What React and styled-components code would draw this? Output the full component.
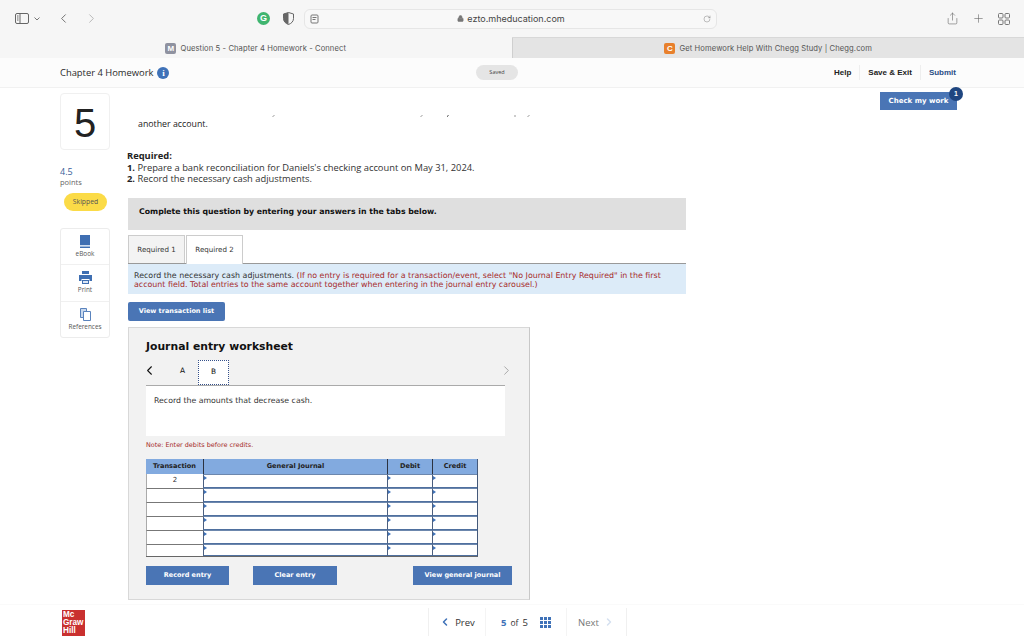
import React from 'react';
import styled, { createGlobalStyle } from 'styled-components';
import { ChevronLeft, ChevronRight, Plus, Share, RotateCw, Lock } from 'lucide-react';

const GlobalStyle = createGlobalStyle`
  html, body {
    margin: 0;
    padding: 0;
    background: #fff;
  }
  * {
    box-sizing: border-box;
  }
  #root {
    width: 1024px;
    height: 640px;
    overflow: hidden;
  }
`;

const sans = `'Open Sans', 'Liberation Sans', sans-serif`;
const verdana = `'DejaVu Sans', 'Liberation Sans', sans-serif`;

const Page = styled.div`
  width: 1024px;
  height: 640px;
  display: flex;
  flex-direction: column;
  font-family: ${sans};
  color: #222;
`;

const Toolbar = styled.div`
  height: 37px;
  background: #f6f6f6;
  display: flex;
  align-items: center;
  padding: 0 8px 0 15px;
  color: #777;
`;

const ToolGroup = styled.div`
  display: flex;
  flex-shrink: 0;
  align-items: center;
  gap: ${(p) => p.$gap || 0}px;
  margin-left: ${(p) => p.$left || 0}px;
`;

const AddressBar = styled.div`
  width: 413px;
  height: 20px;
  flex-shrink: 0;
  margin-left: 10px;
  border: 1px solid #e6e6e6;
  border-radius: 6px;
  background: #f8f8f8;
  display: flex;
  align-items: center;
  padding: 0 5px;
  font: 9px 'Inter', sans-serif;
  color: #444;
`;

const Url = styled.div`
  flex: 1;
  display: flex;
  justify-content: center;
  align-items: center;
  gap: 3px;
`;

const GrammarlyDot = styled.div`
  width: 13px;
  height: 13px;
  border-radius: 50%;
  background: #3fb56f;
  color: #fff;
  font: 700 9px/13px 'Liberation Sans', sans-serif;
  text-align: center;
`;

const TabRow = styled.div`
  height: 21px;
  display: flex;
  border-top: 1px solid #d8d8d8;
`;

const BrowserTab = styled.div`
  flex: 1;
  display: flex;
  align-items: center;
  justify-content: center;
  gap: 4px;
  font: 7.6px 'Inter', sans-serif;
  letter-spacing: 0.1px;
  color: #555;
  background: ${(p) => (p.$active ? '#f6f6f6' : '#e4e4e4')};
  border-left: ${(p) => (p.$active ? 'none' : '1px solid #cfcfcf')};
  border-top: ${(p) => (p.$active ? '1px solid #f6f6f6' : 'none')};
  margin-top: ${(p) => (p.$active ? '-1px' : '0')};
`;

const Favicon = styled.span`
  width: 11px;
  height: 11px;
  border-radius: 2px;
  background: ${(p) => p.$color};
  color: #fff;
  font: 700 8px/11px 'Liberation Sans', sans-serif;
  text-align: center;
`;

const AppHeader = styled.div`
  height: 30px;
  background: #fcfcfc;
  border-bottom: 1px solid #f1f1f1;
  display: flex;
  align-items: center;
  padding: 0 60px;
`;

const HeaderTitle = styled.div`
  font-size: 9.4px;
  color: #2a2a2a;
  width: 416px;
  display: flex;
  align-items: center;
  gap: 4px;
`;

const InfoDot = styled.span`
  width: 12px;
  height: 12px;
  border-radius: 50%;
  background: #3f72b8;
  color: #fff;
  font: 700 9px/12px 'Liberation Serif', serif;
  text-align: center;
`;

const SavedPill = styled.div`
  width: 42px;
  height: 15px;
  border-radius: 8px;
  background: #e5e5e5;
  font-size: 5.5px;
  line-height: 15px;
  text-align: center;
  color: #444;
`;

const HeaderLinks = styled.div`
  margin-left: auto;
  display: flex;
  align-items: center;
  height: 15px;
`;

const HeaderLink = styled.span`
  font-family: 'Liberation Sans', sans-serif;
  font-size: 8px;
  font-weight: 700;
  color: ${(p) => (p.$submit ? '#2a4d86' : '#222')};
  padding: 0 8px;
  line-height: 15px;
  border-left: ${(p) => (p.$first ? 'none' : '1px solid #eee')};
`;

const Body = styled.div`
  flex: 1;
  display: flex;
  padding: 5px 0 0 60px;
  min-height: 0;
`;

const Side = styled.div`
  width: 50px;
  display: flex;
  flex-direction: column;
  font-size: 8px;
`;

const NumberBox = styled.div`
  height: 57px;
  border: 1px solid #f0f0f0;
  border-radius: 4px;
  font: 40px/58px 'Liberation Sans', sans-serif;
  color: #222;
  text-align: center;
`;

const Worth = styled.div`
  margin-top: 16px;
  font-size: 9px;
  line-height: 11px;
  color: #3a5f9a;
`;

const WorthLabel = styled.div`
  font-size: 7.5px;
  line-height: 11px;
  color: #666;
`;

const SkippedPill = styled.div`
  width: 43px;
  height: 18px;
  margin: 5px 0 0 4px;
  border-radius: 9px;
  background: #fbdb47;
  font-size: 6.8px;
  line-height: 18px;
  text-align: center;
  color: #555;
`;

const ToolBox = styled.div`
  margin-top: 17px;
  height: 110px;
  border: 1px solid #ececec;
  border-radius: 3px;
  display: flex;
  flex-direction: column;
`;

const ToolCell = styled.div`
  flex: 1;
  display: flex;
  flex-direction: column;
  align-items: center;
  justify-content: center;
  gap: 1px;
  font-size: 6.4px;
  color: #555;
  border-top: ${(p) => (p.$first ? 'none' : '1px solid #f0f0f0')};
`;

const Main = styled.div`
  width: 559px;
  margin-left: 17px;
  display: flex;
  flex-direction: column;
`;

const ClippedLine = styled.svg`
  display: block;
  margin: 20px 0 0 0;
  height: 5px;
  width: 559px;
`;

const Fragment = styled.div`
  font-size: 8.8px;
  line-height: 12px;
  padding-left: 11px;
`;

const Required = styled.div`
  margin-top: 20px;
  font-size: 9.35px;
  line-height: 11.5px;
  color: #333;
  b {
    color: #222;
  }
`;

const Instruction = styled.div`
  margin-top: 13px;
  height: 32px;
  margin-left: 1px;
  background: #dfdfdf;
  padding-left: 11px;
  font: 700 7.77px/27px ${verdana};
  color: #111;
`;

const Tabs = styled.div`
  margin: 5px 0 0 1px;
  height: 29px;
  display: flex;
  align-items: flex-start;
  border-bottom: 1px solid #999;
`;

const Tab = styled.div`
  width: 57px;
  height: ${(p) => (p.$active ? '29px' : '28px')};
  margin-left: ${(p) => (p.$active ? '1px' : '0')};
  background: ${(p) => (p.$active ? '#fff' : '#f3f3f3')};
  border: 1px solid #ccc;
  border-bottom: none;
  font: 7.1px/27px ${verdana};
  text-align: center;
  color: #333;
`;

const Prompt = styled.div`
  margin-left: 1px;
  height: 30px;
  background: #dcebf8;
  padding: 7px 6px 0 6px;
  font: 7.9px/9.4px ${verdana};
  color: #333;
`;

const PromptNote = styled.span`
  color: #a62a2a;
`;

const BlueButton = styled.div`
  width: ${(p) => p.$w}px;
  height: 19px;
  margin-left: ${(p) => p.$left || 0}px;
  background: #4a75b5;
  color: #fff;
  border-radius: ${(p) => p.$radius || 0}px;
  font: 700 6.5px/19px ${verdana};
  text-align: center;
`;

const TransactionButton = styled(BlueButton)`
  margin: 8px 0 6px 1px;
`;

const Panel = styled.div`
  margin-left: 1px;
  width: 402px;
  height: 273px;
  background: #f2f2f2;
  border: 1px solid #d8d8d8;
  border-right-color: #c8c8c8;
  padding: 11px 17px 0 17px;
  display: flex;
  flex-direction: column;
`;

const PanelTitle = styled.div`
  font: 700 10.8px/16px ${verdana};
  color: #111;
`;

const Carousel = styled.div`
  margin-top: 5px;
  height: 25px;
  display: flex;
  align-items: center;
  color: #111;
`;

const BackArrow = styled(ChevronLeft)`
  margin: 0 0 4px -4px;
`;

const Slide = styled.div`
  width: 31px;
  height: 25px;
  font: 7.4px/21px ${verdana};
  text-align: center;
  background: ${(p) => (p.$active ? '#fff' : 'transparent')};
  border: ${(p) => (p.$active ? '1px dotted #35508a' : 'none')};
  margin-left: ${(p) => p.$left || 0}px;
`;

const CarouselNext = styled.div`
  margin: 0 -2px 4px auto;
  display: flex;
  color: #999;
`;

const SlideBody = styled.div`
  width: 359px;
  height: 51px;
  background: #fff;
  border-top: 1px solid #aaa;
  padding: 9px 8px;
  font: 7.8px/11px ${verdana};
  color: #333;
`;

const Note = styled.div`
  margin-top: 5px;
  font: 6.45px/9px ${verdana};
  color: #a62a2a;
`;

const Sheet = styled.div`
  margin-top: 9px;
  width: 332px;
  display: grid;
  grid-template-columns: 57px 184px 45px 45px;
  border-right: 1px solid #44597a;
  border-bottom: 1px solid #666;
`;

const HeadCell = styled.div`
  height: 15px;
  background: #82aadf;
  border-left: ${(p) => (p.$first ? 'none' : '1px solid #2b3240')};
  font: 700 6.6px/15px ${verdana};
  text-align: center;
  color: #222;
`;

const TransCell = styled.div`
  height: ${(p) => (p.$last ? 12 : 14)}px;
  background: #fff;
  border-top: ${(p) => (p.$first ? 'none' : '1px solid #777')};
  border-left: 1px solid #aaa;
  font: 7px/13px ${verdana};
  text-align: center;
  color: #333;
`;

const EntryCell = styled.div`
  height: ${(p) => (p.$last ? 12 : 14)}px;
  background: #fff;
  position: relative;
  border-left: 1px solid #4b5f80;
  border-bottom: 1px solid #4f709f;
  border-top: 1px solid #6c87ad;
  &::before {
    content: '';
    position: absolute;
    left: 0;
    top: 1px;
    border-left: 3px solid #3f72b8;
    border-top: 2px solid transparent;
    border-bottom: 2px solid transparent;
  }
`;

const PanelActions = styled.div`
  margin-top: 9px;
  display: flex;
`;

const RightRail = styled.div`
  margin: -1px 0 0 194px;
  width: 77px;
  height: 18px;
  position: relative;
`;

const CheckWork = styled(BlueButton)`
  width: 77px;
  height: 18px;
  line-height: 18px;
  font-size: 7px;
`;

const Badge = styled.div`
  position: absolute;
  right: -6px;
  top: -5px;
  width: 14px;
  height: 14px;
  border-radius: 50%;
  background: #1f4680;
  color: #fff;
  font: 700 7px/14px 'Liberation Sans', sans-serif;
  text-align: center;
`;

const Footer = styled.div`
  height: 36px;
  display: flex;
  padding-left: 62px;
  border-top: 1px solid #fafafa;
`;

const Logo = styled.div`
  width: 23px;
  height: 26px;
  margin-top: 5px;
  background: #c9302f;
  color: #fff;
  padding: 1px 1px;
  font: 700 8.2px/7.8px 'Liberation Sans', sans-serif;
`;

const Pager = styled.div`
  margin-left: 343px;
  height: 28px;
  margin-top: 3px;
  display: flex;
  align-items: center;
  border-left: 1px solid #f0f0f0;
  border-right: 1px solid #f0f0f0;
  font-size: 9.5px;
`;

const PagerCell = styled.div`
  width: ${(p) => p.$w}px;
  height: 28px;
  display: flex;
  align-items: center;
  justify-content: center;
  gap: ${(p) => p.$gap || 4}px;
  border-left: ${(p) => (p.$first ? 'none' : '1px solid #f4f4f4')};
  color: ${(p) => p.$color || '#333'};
`;

const PageCurrent = styled.b`
  color: #3f72b8;
`;

const Small = styled.span`
  font-size: 8.5px;
`;

const GridDots = styled.div`
  margin-left: 8px;
  width: 11px;
  height: 11px;
  display: grid;
  grid-template-columns: repeat(3, 3px);
  grid-auto-rows: 3px;
  gap: 1px;
  span {
    background: #3f72b8;
  }
`;

const SidebarIcon = () => (
  <svg width="14" height="11" viewBox="0 0 14 11" fill="none" stroke="#666" strokeWidth="1">
    <rect x="0.5" y="0.5" width="13" height="10" rx="1.5" />
    <path d="M5 .5v10" />
    <path d="M2 3h1.5M2 5h1.5M2 7h1.5" />
  </svg>
);

const CaretDown = () => (
  <svg width="6" height="4" viewBox="0 0 6 4" fill="none" stroke="#777" strokeWidth="1">
    <path d="M.5.5 3 3 5.5.5" />
  </svg>
);

const ShieldIcon = () => (
  <svg width="11" height="13" viewBox="0 0 11 13">
    <path d="M5.5.5 10.5 2v4.5c0 3-2.2 5-5 6-2.8-1-5-3-5-6V2z" fill="#f6f6f6" stroke="#666" />
    <path d="M5.5.5v12c-2.8-1-5-3-5-6V2z" fill="#666" />
  </svg>
);

const ReaderIcon = () => (
  <svg width="9" height="10" viewBox="0 0 9 10" fill="none" stroke="#777" strokeWidth="1">
    <rect x="1" y="1" width="7" height="8" rx="1" />
    <path d="M2.5 3.5h4M2.5 5.5h3" />
  </svg>
);

const TabsIcon = () => (
  <svg width="12" height="12" viewBox="0 0 12 12" fill="none" stroke="#777" strokeWidth="1">
    <rect x="0.5" y="0.5" width="4.5" height="4.5" rx="1" />
    <rect x="7" y="0.5" width="4.5" height="4.5" rx="1" />
    <rect x="0.5" y="7" width="4.5" height="4.5" rx="1" />
    <rect x="7" y="7" width="4.5" height="4.5" rx="1" />
  </svg>
);

const BookIcon = () => (
  <svg width="12" height="13" viewBox="0 0 12 13">
    <path d="M1 0h10v10H1z" fill="#3f6fb2" />
    <path d="M1 10.5h10V12H1z" fill="#9db8dc" />
    <path d="M1 12h10v1H1z" fill="#3f6fb2" />
  </svg>
);

const PrintIcon = () => (
  <svg width="13" height="13" viewBox="0 0 13 13">
    <path d="M3 0h7v3H3z" fill="#3f6fb2" />
    <path d="M0 4h13v6h-2.500V8h-8v2H0z" fill="#3f6fb2" />
    <path d="M3 9h7v4H3z" fill="#3f6fb2" />
    <path d="M4 10h5v2H4z" fill="#dbe6f4" />
  </svg>
);

const PagesIcon = () => (
  <svg width="11" height="13" viewBox="0 0 11 13" fill="none" stroke="#5a83bd" strokeWidth="1">
    <path d="M.5.5h6v9h-6z" fill="#c9d9ee" />
    <path d="M3.500 3.500h7v9h-7z" fill="#fff" />
  </svg>
);

const rows = [0, 1, 2, 3, 4, 5];

export default function App() {
  return (
    <Page>
      <GlobalStyle />
      <Toolbar>
        <ToolGroup $gap={5}>
          <SidebarIcon />
          <CaretDown />
        </ToolGroup>
        <ToolGroup $gap={13} $left={16}>
          <ChevronLeft size={15} strokeWidth={1.3} color="#555" />
          <ChevronRight size={15} strokeWidth={1.3} color="#aaa" />
        </ToolGroup>
        <ToolGroup $gap={13} $left={158}>
          <GrammarlyDot>G</GrammarlyDot>
          <ShieldIcon />
        </ToolGroup>
        <AddressBar>
          <ReaderIcon />
          <Url>
            <Lock size={7} color="#777" fill="#777" />
            ezto.mheducation.com
          </Url>
          <RotateCw size={8} strokeWidth={1.2} color="#666" />
        </AddressBar>
        <ToolGroup $gap={13} $left={229}>
          <Share size={13} strokeWidth={1.1} color="#666" />
          <Plus size={13} strokeWidth={1.1} color="#666" />
          <TabsIcon />
        </ToolGroup>
      </Toolbar>
      <TabRow>
        <BrowserTab $active>
          <Favicon $color="#8f92a0">M</Favicon>
          Question 5 - Chapter 4 Homework - Connect
        </BrowserTab>
        <BrowserTab>
          <Favicon $color="#e8802c">C</Favicon>
          Get Homework Help With Chegg Study | Chegg.com
        </BrowserTab>
      </TabRow>
      <AppHeader>
        <HeaderTitle>
          Chapter 4 Homework
          <InfoDot>i</InfoDot>
        </HeaderTitle>
        <SavedPill>Saved</SavedPill>
        <HeaderLinks>
          <HeaderLink $first>Help</HeaderLink>
          <HeaderLink>Save &amp; Exit</HeaderLink>
          <HeaderLink $submit>Submit</HeaderLink>
        </HeaderLinks>
      </AppHeader>
      <Body>
        <Side>
          <NumberBox>5</NumberBox>
          <Worth>4.5</Worth>
          <WorthLabel>points</WorthLabel>
          <SkippedPill>Skipped</SkippedPill>
          <ToolBox>
            <ToolCell $first>
              <BookIcon />
              eBook
            </ToolCell>
            <ToolCell>
              <PrintIcon />
              Print
            </ToolCell>
            <ToolCell>
              <PagesIcon />
              References
            </ToolCell>
          </ToolBox>
        </Side>
        <Main>
          <ClippedLine viewBox="0 0 559 5" fill="none" stroke="#333" strokeWidth="1">
            <path d="M146 3.500l1-1M294 3.500l1-1M320 3.500l1.500-1M388 3.500v-1M401 3.500l1-1" />
          </ClippedLine>
          <Fragment>another account.</Fragment>
          <Required>
            <b>Required:</b>
            <br />
            <b>1.</b> Prepare a bank reconciliation for Daniels's checking account on May 31, 2024.
            <br />
            <b>2.</b> Record the necessary cash adjustments.
          </Required>
          <Instruction>Complete this question by entering your answers in the tabs below.</Instruction>
          <Tabs>
            <Tab>Required 1</Tab>
            <Tab $active>Required 2</Tab>
          </Tabs>
          <Prompt>
            Record the necessary cash adjustments.{' '}
            <PromptNote>
              (If no entry is required for a transaction/event, select "No Journal Entry Required" in the first
              account field. Total entries to the same account together when entering in the journal entry carousel.)
            </PromptNote>
          </Prompt>
          <TransactionButton $w={97} $radius={2}>View transaction list</TransactionButton>
          <Panel>
            <PanelTitle>Journal entry worksheet</PanelTitle>
            <Carousel>
              <BackArrow size={15} strokeWidth={1.7} />
              <Slide $left={10}>A</Slide>
              <Slide $active>B</Slide>
              <CarouselNext>
                <ChevronRight size={15} strokeWidth={1.3} />
              </CarouselNext>
            </Carousel>
            <SlideBody>Record the amounts that decrease cash.</SlideBody>
            <Note>Note: Enter debits before credits.</Note>
            <Sheet>
              <HeadCell $first>Transaction</HeadCell>
              <HeadCell>General Journal</HeadCell>
              <HeadCell>Debit</HeadCell>
              <HeadCell>Credit</HeadCell>
              {rows.map((row) => (
                <React.Fragment key={row}>
                  <TransCell $first={row === 0} $last={row === 5}>{row === 0 ? '2' : ''}</TransCell>
                  <EntryCell $last={row === 5} />
                  <EntryCell $last={row === 5} />
                  <EntryCell $last={row === 5} />
                </React.Fragment>
              ))}
            </Sheet>
            <PanelActions>
              <BlueButton $w={83}>Record entry</BlueButton>
              <BlueButton $w={84} $left={24}>Clear entry</BlueButton>
              <BlueButton $w={99} $left={76}>View general journal</BlueButton>
            </PanelActions>
          </Panel>
        </Main>
        <RightRail>
          <CheckWork $w={77}>Check my work</CheckWork>
          <Badge>1</Badge>
        </RightRail>
      </Body>
      <Footer>
        <Logo>
          Mc
          <br />
          Graw
          <br />
          Hill
        </Logo>
        <Pager>
          <PagerCell $first $w={56}>
            <ChevronLeft size={12} strokeWidth={3} color="#3f72b8" />
            Prev
          </PagerCell>
          <PagerCell $w={81} $gap={4}>
            <PageCurrent>5</PageCurrent>
            <Small>of</Small>
            5
            <GridDots>
              {Array.from({ length: 9 }, (_, i) => (
                <span key={i} />
              ))}
            </GridDots>
          </PagerCell>
          <PagerCell $w={60} $color="#777">
            Next
            <ChevronRight size={12} strokeWidth={3} color="#d5e0f0" />
          </PagerCell>
        </Pager>
      </Footer>
    </Page>
  );
}
